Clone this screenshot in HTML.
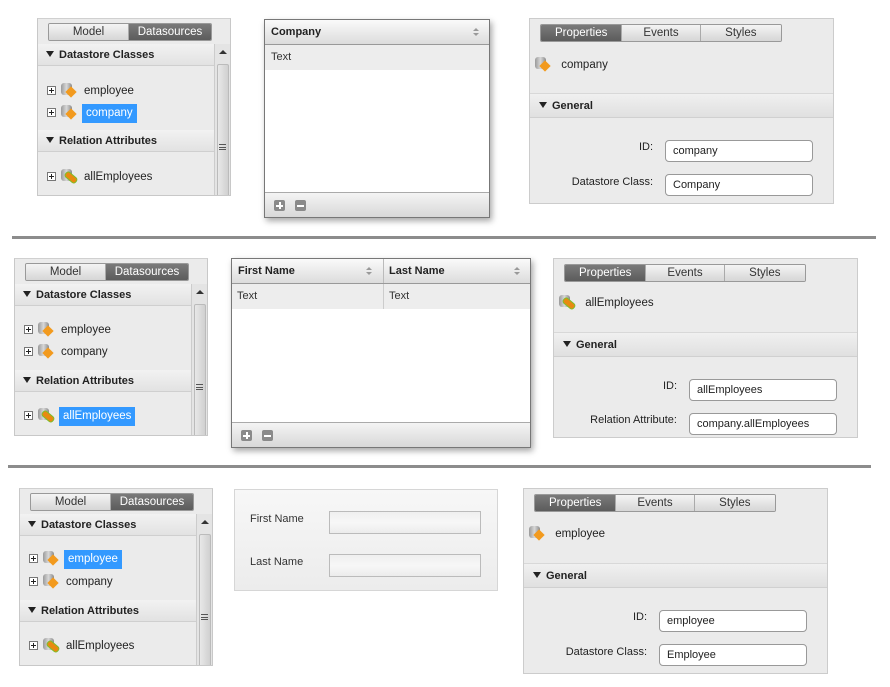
<!DOCTYPE html>
<html><head><meta charset="utf-8"><style>
*{box-sizing:border-box;margin:0;padding:0}
body{width:890px;height:687px;background:#fff;position:relative;overflow:hidden;font-family:"Liberation Sans",sans-serif;font-size:11px;color:#222}
.a{position:absolute}
.ds{position:absolute;width:194px;height:178px;background:#ebebeb;border:1px solid #c8c8c8;border-top:1px solid #d0d0d0;overflow:hidden}
.tabs{position:absolute;display:flex;border:1px solid #999;border-radius:2px;height:18px;overflow:hidden}
.tabs div{text-align:center;line-height:16px;font-size:11.5px;color:#333;background:linear-gradient(#f4f4f4,#d6d6d6);border-right:1px solid #aaa}
.tabs div.on{background:linear-gradient(#7a7a7a,#5c5c5c);color:#fff}
.hdr{position:absolute;left:0;width:176px;height:22px;background:linear-gradient(#f2f2f2,#e2e2e2);border-bottom:1px solid #cfcfcf;font-weight:bold;font-size:11px;line-height:22px;padding-left:8px;color:#222}
.tri{display:inline-block;width:0;height:0;border-left:4px solid transparent;border-right:4px solid transparent;border-top:6px solid #222;margin-right:5px;vertical-align:1px}
.sb{position:absolute;left:176px;top:25px;width:17px;height:153px;background:#e4e4e4;border-left:1px solid #ccc}
.sb .th{position:absolute;left:2px;top:20px;width:12px;height:140px;background:linear-gradient(90deg,#e8e8e8,#d0d0d0);border:1px solid #bbb;border-radius:2px}
.it{position:absolute;left:9px;height:19px;line-height:19px;font-size:11.5px;color:#222}
.pl{display:inline-block;width:9px;height:9px;border:1px solid #777;background:#fff;position:relative;vertical-align:-1px;margin-right:4px}
.pl:before{content:"";position:absolute;left:1px;top:3px;width:5px;height:1px;background:#222}
.pl:after{content:"";position:absolute;left:3px;top:1px;width:1px;height:5px;background:#222}
.ic{display:inline-block;width:18px;height:16px;position:relative;vertical-align:-4px;margin-right:6px}
.ic .db{position:absolute;left:1px;top:1px;width:11px;height:12px;background:linear-gradient(90deg,#9a9a9a,#d8d8d8,#8a8a8a);border-radius:3px}
.ic .dm{position:absolute;left:7px;top:6px;width:8px;height:8px;background:#f29a1e;transform:rotate(45deg)}
.ic .rl{position:absolute;left:5px;top:7px;width:12px;height:5px;background:#e88a10;transform:rotate(40deg);border-radius:2px;box-shadow:0 0 0 1px #7bbf2a}
.sel{background:#3399ff;color:#fff;padding:0 4px;display:inline-block;height:19px;line-height:19px;margin-left:-2px}
.pp{position:absolute;width:305px;height:186px;background:#ebebeb;border:1px solid #ccc;overflow:hidden}
.gh{position:absolute;left:0;width:303px;height:25px;background:linear-gradient(#f0f0f0,#e0e0e0);border-top:1px solid #d8d8d8;border-bottom:1px solid #d0d0d0;font-weight:bold;font-size:11px;line-height:24px;padding-left:9px}
.lb{position:absolute;text-align:right;font-size:11px;color:#222}
.in{position:absolute;width:148px;height:22px;background:#fff;border:1px solid #999;border-radius:4px;font-size:11px;line-height:20px;padding-left:7px;color:#222}
.grid{position:absolute;border:1px solid #777;background:#fff;box-shadow:2px 3px 6px rgba(0,0,0,.35)}
.gth{position:absolute;left:0;top:0;right:0;height:25px;background:linear-gradient(#fafafa,#dcdcdc);border-bottom:1px solid #999;font-weight:bold;font-size:11px;line-height:25px}
.row{position:absolute;left:0;right:0;top:25px;height:25px;background:#ededed;font-size:11px;line-height:24px;color:#333}
.gf{position:absolute;left:0;right:0;bottom:0;height:25px;background:linear-gradient(#f4f4f4,#d8d8d8);border-top:1px solid #aaa}
.bt{position:absolute;top:7px;width:11px;height:11px;background:#8a8a8a;border-radius:2px}
.bt:before{content:"";position:absolute;left:2px;top:5px;width:7px;height:2px;background:#fff}
.bt.p:after{content:"";position:absolute;left:5px;top:2px;width:2px;height:7px;background:#fff}
.srt{position:absolute;top:8px;width:0;height:0;border-left:3px solid transparent;border-right:3px solid transparent;border-bottom:3px solid #999}
.srt:after{content:"";position:absolute;left:-3px;top:5px;border-left:3px solid transparent;border-right:3px solid transparent;border-top:3px solid #999}
.hr{position:absolute;height:3px;background:#8c8c8c}
</style></head><body>

<!-- ROW 1 -->
<div class="ds" style="left:37px;top:18px">
 <div class="tabs" style="left:10px;top:4px;width:164px"><div style="width:81px">Model</div><div class="on" style="width:83px;border:0">Datasources</div></div>
 <div class="hdr" style="top:25px"><span class="tri"></span>Datastore Classes</div>
 <div class="sb"><div style="position:absolute;left:4px;top:6px;border-left:4px solid transparent;border-right:4px solid transparent;border-bottom:4px solid #333"></div><div class="th"></div><div style="position:absolute;left:4px;top:100px;width:7px;height:6px;border-top:1px solid #555;border-bottom:1px solid #555"><div style="margin-top:2px;height:1px;background:#555"></div></div></div>
 <div class="it" style="top:63px"><span class="pl"></span><span class="ic"><span class="db"></span><span class="dm"></span></span>employee</div>
 <div class="it" style="top:85px"><span class="pl"></span><span class="ic"><span class="db"></span><span class="dm"></span></span><span class="sel">company</span></div>
 <div class="hdr" style="top:111px"><span class="tri"></span>Relation Attributes</div>
 <div class="it" style="top:149px"><span class="pl"></span><span class="ic"><span class="db"></span><span class="rl"></span></span>allEmployees</div>
</div>

<div class="grid" style="left:264px;top:19px;width:226px;height:199px">
 <div class="gth" style="padding-left:6px">Company<span class="srt" style="left:208px"></span></div>
 <div class="row" style="padding-left:6px">Text</div>
 <div class="gf"><span class="bt p" style="left:9px"></span><span class="bt" style="left:30px"></span></div>
</div>

<div class="pp" style="left:529px;top:18px">
 <div class="tabs" style="left:10px;top:5px;width:242px"><div class="on" style="width:82px">Properties</div><div style="width:79px">Events</div><div style="width:81px;border:0">Styles</div></div>
 <div class="it" style="left:4px;top:37px"><span class="ic"><span class="db"></span><span class="dm"></span></span>&nbsp;company</div>
 <div class="gh" style="top:74px"><span class="tri"></span>General</div>
 <div class="lb" style="right:180px;top:122px">ID:</div>
 <div class="in" style="left:135px;top:121px">company</div>
 <div class="lb" style="right:180px;top:157px">Datastore Class:</div>
 <div class="in" style="left:135px;top:155px">Company</div>
</div>

<div class="hr" style="left:12px;top:236px;width:864px"></div>

<!-- ROW 2 -->
<div class="ds" style="left:14px;top:258px">
 <div class="tabs" style="left:10px;top:4px;width:164px"><div style="width:81px">Model</div><div class="on" style="width:83px;border:0">Datasources</div></div>
 <div class="hdr" style="top:25px"><span class="tri"></span>Datastore Classes</div>
 <div class="sb"><div style="position:absolute;left:4px;top:6px;border-left:4px solid transparent;border-right:4px solid transparent;border-bottom:4px solid #333"></div><div class="th"></div><div style="position:absolute;left:4px;top:100px;width:7px;height:6px;border-top:1px solid #555;border-bottom:1px solid #555"><div style="margin-top:2px;height:1px;background:#555"></div></div></div>
 <div class="it" style="top:62px"><span class="pl"></span><span class="ic"><span class="db"></span><span class="dm"></span></span>employee</div>
 <div class="it" style="top:84px"><span class="pl"></span><span class="ic"><span class="db"></span><span class="dm"></span></span>company</div>
 <div class="hdr" style="top:111px"><span class="tri"></span>Relation Attributes</div>
 <div class="it" style="top:148px"><span class="pl"></span><span class="ic"><span class="db"></span><span class="rl"></span></span><span class="sel">allEmployees</span></div>
</div>

<div class="grid" style="left:231px;top:258px;width:300px;height:190px">
 <div class="gth"><span style="position:absolute;left:6px">First Name</span><span class="srt" style="left:134px"></span><span style="position:absolute;left:151px;top:0;bottom:0;border-left:1px solid #bbb;padding-left:5px">Last Name</span><span class="srt" style="left:282px"></span></div>
 <div class="row"><span style="position:absolute;left:5px">Text</span><span style="position:absolute;left:151px;top:0;bottom:0;border-left:1px solid #ccc;padding-left:5px">Text</span></div>
 <div class="gf"><span class="bt p" style="left:9px"></span><span class="bt" style="left:30px"></span></div>
</div>

<div class="pp" style="left:553px;top:258px;height:180px">
 <div class="tabs" style="left:10px;top:5px;width:242px"><div class="on" style="width:82px">Properties</div><div style="width:79px">Events</div><div style="width:81px;border:0">Styles</div></div>
 <div class="it" style="left:4px;top:35px"><span class="ic"><span class="db"></span><span class="rl"></span></span>&nbsp;allEmployees</div>
 <div class="gh" style="top:73px"><span class="tri"></span>General</div>
 <div class="lb" style="right:180px;top:121px">ID:</div>
 <div class="in" style="left:135px;top:120px">allEmployees</div>
 <div class="lb" style="right:180px;top:155px">Relation Attribute:</div>
 <div class="in" style="left:135px;top:154px">company.allEmployees</div>
</div>

<div class="hr" style="left:8px;top:465px;width:863px"></div>

<!-- ROW 3 -->
<div class="ds" style="left:19px;top:488px">
 <div class="tabs" style="left:10px;top:4px;width:164px"><div style="width:81px">Model</div><div class="on" style="width:83px;border:0">Datasources</div></div>
 <div class="hdr" style="top:25px"><span class="tri"></span>Datastore Classes</div>
 <div class="sb"><div style="position:absolute;left:4px;top:6px;border-left:4px solid transparent;border-right:4px solid transparent;border-bottom:4px solid #333"></div><div class="th"></div><div style="position:absolute;left:4px;top:100px;width:7px;height:6px;border-top:1px solid #555;border-bottom:1px solid #555"><div style="margin-top:2px;height:1px;background:#555"></div></div></div>
 <div class="it" style="top:61px"><span class="pl"></span><span class="ic"><span class="db"></span><span class="dm"></span></span><span class="sel">employee</span></div>
 <div class="it" style="top:84px"><span class="pl"></span><span class="ic"><span class="db"></span><span class="dm"></span></span>company</div>
 <div class="hdr" style="top:111px"><span class="tri"></span>Relation Attributes</div>
 <div class="it" style="top:148px"><span class="pl"></span><span class="ic"><span class="db"></span><span class="rl"></span></span>allEmployees</div>
</div>

<div class="a" style="left:234px;top:489px;width:264px;height:102px;background:linear-gradient(#f7f7f7,#ececec);border:1px solid #d6d6d6">
 <div class="a" style="left:15px;top:23px;font-size:11px;color:#333">First Name</div>
 <div class="a" style="left:94px;top:21px;width:152px;height:23px;border:1px solid #bbb;background:linear-gradient(#efefef,#f7f7f7,#ececec)"></div>
 <div class="a" style="left:15px;top:66px;font-size:11px;color:#333">Last Name</div>
 <div class="a" style="left:94px;top:64px;width:152px;height:23px;border:1px solid #bbb;background:linear-gradient(#efefef,#f7f7f7,#ececec)"></div>
</div>

<div class="pp" style="left:523px;top:488px;height:186px">
 <div class="tabs" style="left:10px;top:5px;width:242px"><div class="on" style="width:82px">Properties</div><div style="width:79px">Events</div><div style="width:81px;border:0">Styles</div></div>
 <div class="it" style="left:4px;top:36px"><span class="ic"><span class="db"></span><span class="dm"></span></span>&nbsp;employee</div>
 <div class="gh" style="top:74px"><span class="tri"></span>General</div>
 <div class="lb" style="right:180px;top:122px">ID:</div>
 <div class="in" style="left:135px;top:121px">employee</div>
 <div class="lb" style="right:180px;top:157px">Datastore Class:</div>
 <div class="in" style="left:135px;top:155px">Employee</div>
</div>

</body></html>
